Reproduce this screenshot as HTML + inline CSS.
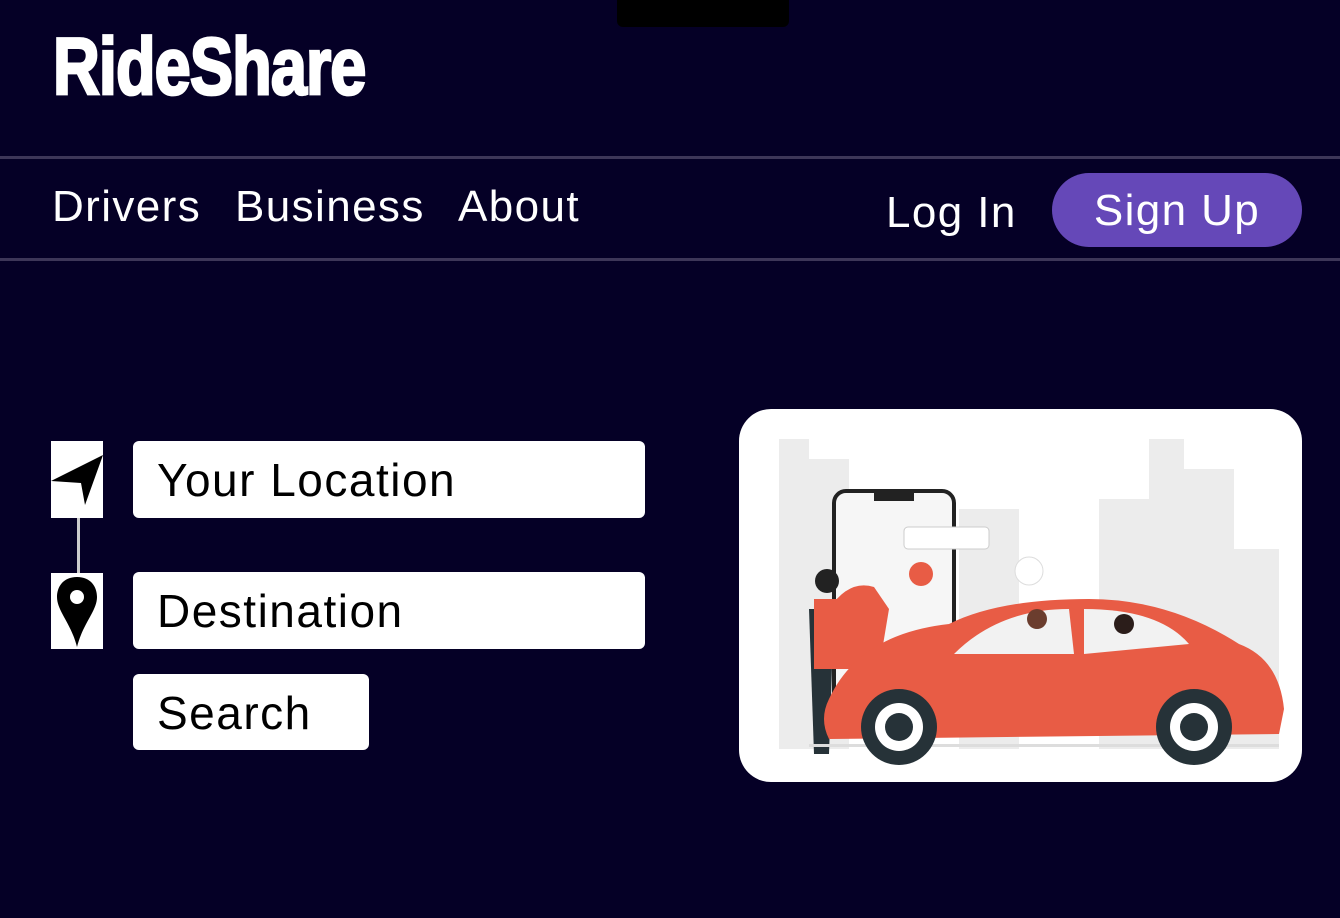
<!DOCTYPE html>
<html><head><style>
body{margin:0;width:1340px;height:918px;background:#050026;position:relative;overflow:hidden;font-family:"Liberation Sans",sans-serif;color:#fff}
.a{position:absolute}
.logo{left:53px;top:27px;font-weight:bold;font-size:72px;letter-spacing:-1px;transform:scaleY(1.12) scaleX(.9);transform-origin:left top;line-height:72px;-webkit-text-stroke:2.5px #fff}
.line{left:0;width:1340px;height:3px;background:#3d3658}
.nav{font-size:44px;top:182px;letter-spacing:1.4px}
.box{background:#fff;border-radius:6px;color:#000;font-size:46px;letter-spacing:1.5px;padding-left:24px;box-sizing:border-box;line-height:78px}
</style></head><body>
<div class="a" style="left:617px;top:0;width:172px;height:27px;background:#000;border-radius:0 0 6px 6px"></div>
<div class="a logo">RideShare</div>
<div class="a line" style="top:156px"></div>
<div class="a line" style="top:258px"></div>
<div class="a nav" style="left:52px">Drivers</div>
<div class="a nav" style="left:235px">Business</div>
<div class="a nav" style="left:458px">About</div>
<div class="a nav" style="left:886px;top:188px">Log In</div>
<div class="a" style="left:1052px;top:173px;width:250px;height:74px;border-radius:37px;background:#6548b8;font-size:44px;letter-spacing:1.4px;line-height:76px;text-align:center">Sign Up</div>

<div class="a" style="left:51px;top:441px;width:52px;height:77px;background:#fff"><svg width="52" height="77" viewBox="0 0 52 77"><path d="M0 40 L52 14 L34 64 L30 42 Z" fill="#000"/></svg></div>
<div class="a" style="left:77px;top:518px;width:3px;height:55px;background:#ccc"></div>
<div class="a" style="left:51px;top:573px;width:52px;height:76px;background:#fff"><svg width="52" height="76" viewBox="0 0 52 76"><path d="M26 4 C12 4 6 14 6 24 C6 38 20 50 26 74 C32 50 46 38 46 24 C46 14 40 4 26 4 Z" fill="#000"/><circle cx="26" cy="24" r="7" fill="#fff"/></svg></div>
<div class="a box" style="left:133px;top:441px;width:512px;height:77px">Your Location</div>
<div class="a box" style="left:133px;top:572px;width:512px;height:77px">Destination</div>
<div class="a box" style="left:133px;top:674px;width:236px;height:76px">Search</div>

<div class="a" style="left:739px;top:409px;width:563px;height:373px;background:#fff;border-radius:32px;overflow:hidden">
<svg width="563" height="373" viewBox="0 0 563 373">
<g fill="#ececec">
<rect x="40" y="30" width="30" height="310"/><rect x="70" y="50" width="40" height="290"/><rect x="410" y="30" width="35" height="310"/><rect x="360" y="90" width="50" height="250"/><rect x="445" y="60" width="50" height="280"/><rect x="495" y="140" width="45" height="200"/><rect x="220" y="100" width="60" height="240"/>
</g>
<rect x="95" y="82" width="120" height="240" rx="12" fill="#f6f6f6" stroke="#222" stroke-width="4"/>
<rect x="135" y="82" width="40" height="10" fill="#222"/>
<circle cx="182" cy="165" r="12" fill="#e85c45"/>
<rect x="165" y="118" width="85" height="22" rx="4" fill="#fff" stroke="#ccc"/>
<circle cx="290" cy="162" r="14" fill="#fff" stroke="#ddd"/>
<path d="M90 200 Q110 170 135 178 L150 200 L140 260 L100 260 Z" fill="#e85c45"/>
<circle cx="88" cy="172" r="12" fill="#222"/>
<path d="M70 200 L95 200 L90 345 L75 345 Z" fill="#263238"/>
<path d="M75 190 L100 190 L100 260 L75 260 Z" fill="#e85c45"/>
<path d="M90 290 Q120 225 210 215 Q260 190 350 190 Q430 190 500 235 Q540 250 545 300 L540 325 L90 330 Q80 310 90 290 Z" fill="#e85c45"/>
<path d="M215 245 Q260 200 330 200 L335 245 Z" fill="#f2f2f2"/>
<path d="M345 200 Q420 200 450 235 L345 245 Z" fill="#f2f2f2"/>
<circle cx="298" cy="210" r="10" fill="#6b3d2e"/><circle cx="385" cy="215" r="10" fill="#2b1d1a"/>
<rect x="70" y="335" width="470" height="3" fill="#ddd"/>
<circle cx="160" cy="318" r="38" fill="#263238"/><circle cx="160" cy="318" r="24" fill="#fff"/><circle cx="160" cy="318" r="14" fill="#263238"/>
<circle cx="455" cy="318" r="38" fill="#263238"/><circle cx="455" cy="318" r="24" fill="#fff"/><circle cx="455" cy="318" r="14" fill="#263238"/>
</svg></div>
</body></html>
